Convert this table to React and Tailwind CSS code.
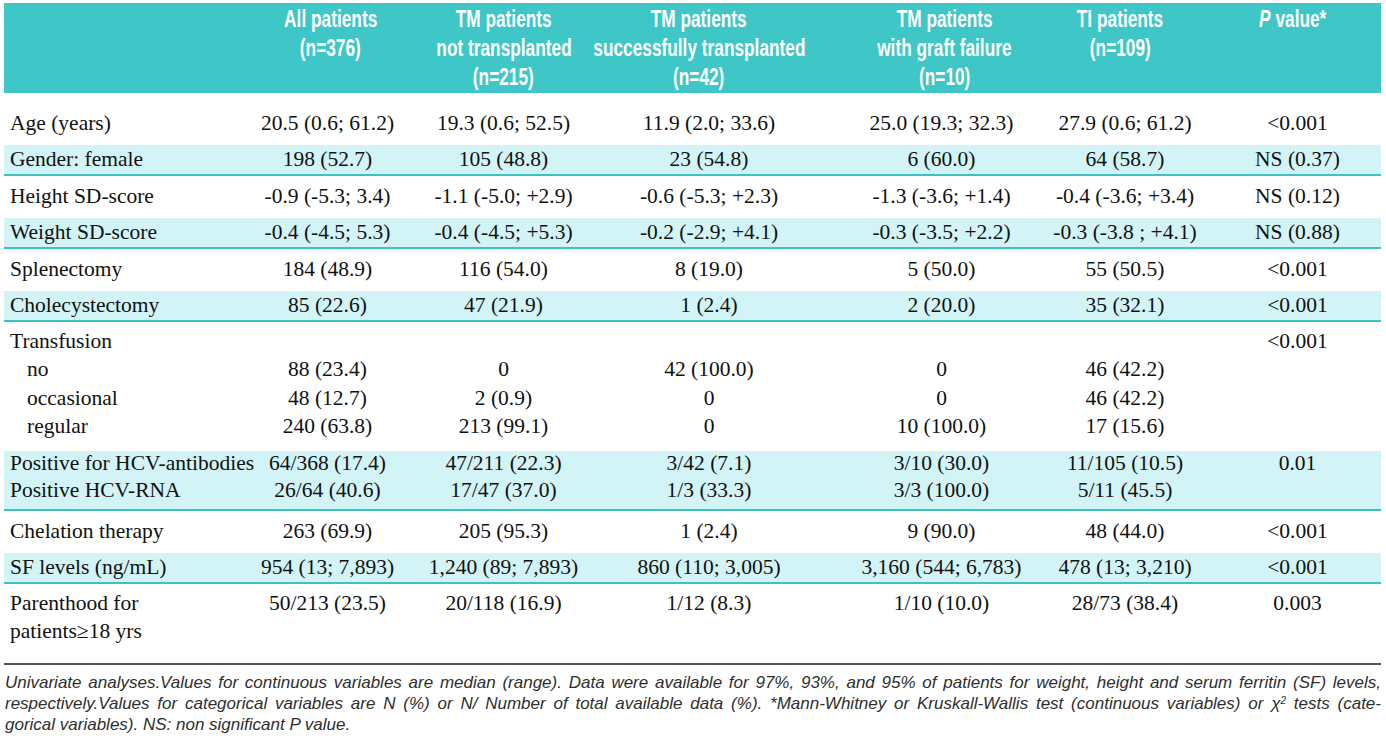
import React from "react";

// column template shared by header and body rows
const cols = "grid grid-cols-[215px_217px_135px_276px_189px_178px_167px]";
const serif = "font-['Liberation_Serif','Times_New_Roman',serif]";
const head = "font-['Liberation_Sans',Arial,sans-serif]";

const headers = [
  { lines: ["All patients", "(n=376)"], shift: "pl-[6px]" },
  { lines: ["TM patients", "not transplanted", "(n=215)"], shift: "" },
  { lines: ["TM patients", "successfully transplanted", "(n=42)"], shift: "pr-[20px]" },
  { lines: ["TM patients", "with graft failure", "(n=10)"], shift: "pl-[6px]" },
  { lines: ["TI patients", "(n=109)"], shift: "pr-[10px]" },
];

function Line({ label, values, indent, className = "" }) {
  return (
    <div className={`${cols} items-center ${className}`}>
      <div className={`whitespace-nowrap ${indent ? "pl-[23px]" : "pl-[6px]"}`}>{label}</div>
      {values.map((v, i) => (
        <div key={i} className="flex justify-center whitespace-nowrap">
          {v}
        </div>
      ))}
    </div>
  );
}

function PlainRow({ label, values }) {
  return <Line label={label} values={values} className="h-[42px]" />;
}

function ShadedRow({ label, values }) {
  return (
    <Line
      label={label}
      values={values}
      className="h-[31px] bg-[#d3f4f6] border-b-2 border-[#3dc2c2]"
    />
  );
}

export default function App() {
  return (
    <div className={`w-[1386px] h-[743px] bg-white overflow-hidden pt-[3px] pl-[4px] text-[#111] ${serif}`}>
      <div className="w-[1377px]">
        {/* header */}
        <div className={`${cols} h-[90px] bg-[#3ec7c6] text-white font-bold ${head} text-[24px] leading-[29px] pt-[1px]`}>
          <div />
          {headers.map((h, i) => (
            <div key={i} className={`flex flex-col items-center whitespace-nowrap ${h.shift}`}>
              {h.lines.map((l) => (
                <span key={l} className="scale-x-[0.72]">{l}</span>
              ))}
            </div>
          ))}
          <div className="flex justify-center whitespace-nowrap pr-[10px]">
            <span className="scale-x-[0.72]">
              <i className="font-bold">P</i> value*
            </span>
          </div>
        </div>

        {/* body */}
        <div className="text-[21.5px] leading-none pt-[10px]">
          <PlainRow label="Age (years)" values={["20.5 (0.6; 61.2)", "19.3 (0.6; 52.5)", "11.9 (2.0; 33.6)", "25.0 (19.3; 32.3)", "27.9 (0.6; 61.2)", "<0.001"]} />
          <ShadedRow label="Gender: female" values={["198 (52.7)", "105 (48.8)", "23 (54.8)", "6 (60.0)", "64 (58.7)", "NS (0.37)"]} />
          <PlainRow label="Height SD-score" values={["-0.9 (-5.3; 3.4)", "-1.1 (-5.0; +2.9)", "-0.6 (-5.3; +2.3)", "-1.3 (-3.6; +1.4)", "-0.4 (-3.6; +3.4)", "NS (0.12)"]} />
          <ShadedRow label="Weight SD-score" values={["-0.4 (-4.5; 5.3)", "-0.4 (-4.5; +5.3)", "-0.2 (-2.9; +4.1)", "-0.3 (-3.5; +2.2)", "-0.3 (-3.8 ; +4.1)", "NS (0.88)"]} />
          <PlainRow label="Splenectomy" values={["184 (48.9)", "116 (54.0)", "8 (19.0)", "5 (50.0)", "55 (50.5)", "<0.001"]} />
          <ShadedRow label="Cholecystectomy" values={["85 (22.6)", "47 (21.9)", "1 (2.4)", "2 (20.0)", "35 (32.1)", "<0.001"]} />

          {/* transfusion block */}
          <div className="pt-[5px] pb-[10px]">
            <Line className="h-[28.5px]" label="Transfusion" values={["", "", "", "", "", "<0.001"]} />
            <Line className="h-[28.5px]" indent label="no" values={["88 (23.4)", "0", "42 (100.0)", "0", "46 (42.2)", ""]} />
            <Line className="h-[28.5px]" indent label="occasional" values={["48 (12.7)", "2 (0.9)", "0", "0", "46 (42.2)", ""]} />
            <Line className="h-[28.5px]" indent label="regular" values={["240 (63.8)", "213 (99.1)", "0", "10 (100.0)", "17 (15.6)", ""]} />
          </div>

          {/* HCV block */}
          <div className="bg-[#d3f4f6] border-b-2 border-[#3dc2c2] pb-[4px]">
            <Line className="h-[26px]" label="Positive for HCV-antibodies" values={["64/368 (17.4)", "47/211 (22.3)", "3/42 (7.1)", "3/10 (30.0)", "11/105 (10.5)", "0.01"]} />
            <Line className="h-[28px]" label="Positive HCV-RNA" values={["26/64 (40.6)", "17/47 (37.0)", "1/3 (33.3)", "3/3 (100.0)", "5/11 (45.5)", ""]} />
          </div>

          <PlainRow label="Chelation therapy" values={["263 (69.9)", "205 (95.3)", "1 (2.4)", "9 (90.0)", "48 (44.0)", "<0.001"]} />
          <ShadedRow label="SF levels (ng/mL)" values={["954 (13; 7,893)", "1,240 (89; 7,893)", "860 (110; 3,005)", "3,160 (544; 6,783)", "478 (13; 3,210)", "<0.001"]} />

          {/* parenthood block */}
          <div className="pt-[5px]">
            <Line className="h-[28.5px]" label="Parenthood for" values={["50/213 (23.5)", "20/118 (16.9)", "1/12 (8.3)", "1/10 (10.0)", "28/73 (38.4)", "0.003"]} />
            <Line className="h-[28.5px]" label="patients≥18 yrs" values={["", "", "", "", "", ""]} />
          </div>
        </div>

        <div className="mt-[17px] h-[2px] bg-[#555]" />

        {/* footnote */}
        <div className="pt-[7px] pl-[1px] text-[17px] leading-[21px] italic text-[#2e2e2e] font-['Liberation_Sans',Arial,sans-serif]">
          <div className="text-justify [text-align-last:justify] whitespace-nowrap">
            Univariate analyses.Values for continuous variables are median (range). Data were available for 97%, 93%, and 95% of patients for weight, height and serum ferritin (SF) levels,
          </div>
          <div className="text-justify [text-align-last:justify] whitespace-nowrap">
            respectively.Values for categorical variables are N (%) or N/ Number of total available data (%). *Mann-Whitney or Kruskall-Wallis test (continuous variables) or χ<sup className="text-[10px]">2</sup> tests (cate-
          </div>
          <div>gorical variables). NS: non significant P value.</div>
        </div>
      </div>
    </div>
  );
}
